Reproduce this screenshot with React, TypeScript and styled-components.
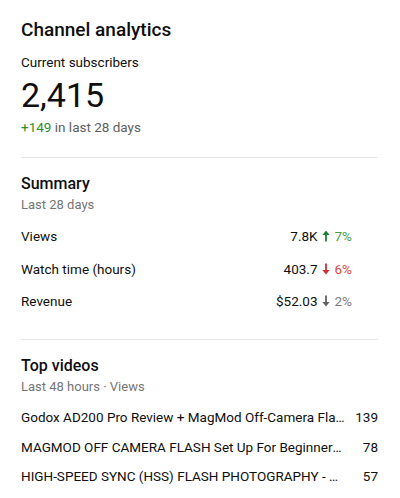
import React from 'react'
import styled, {createGlobalStyle} from 'styled-components'

const GlobalStyle = createGlobalStyle`
    body{
        margin: 0;
        background: #ffffff;
        font-family: Roboto, "Liberation Sans", sans-serif;
        color: #0f0f0f;
    }
`

const metrics = [
    {label: 'Views', value: '7.8K', change: '7%', trend: 'up'},
    {label: 'Watch time (hours)', value: '403.7', change: '6%', trend: 'down'},
    {label: 'Revenue', value: '$52.03', change: '2%', trend: 'flat'},
]

const videos = [
    {title: 'Godox AD200 Pro Review + MagMod Off-Camera Flash Kit', views: 139},
    {title: 'MAGMOD OFF CAMERA FLASH Set Up For Beginners (Step by Step)', views: 78},
    {title: 'HIGH-SPEED SYNC (HSS) FLASH PHOTOGRAPHY - Explained', views: 57},
]

const trendColors: any = {
    up: {arrow: '#1e7e34', text: '#43a047'},
    down: {arrow: '#d32f2f', text: '#e0483e'},
    flat: {arrow: '#606060', text: '#7a7a7a'},
}

function Arrow({trend}: {trend: string}) {
    const up = trend === 'up'
    const c = trendColors[trend].arrow
    return (
        <svg width="8" height="12" viewBox="0 0 8 12">
            {up ? (
                <>
                    <path d="M4 0.5 L7.6 5 L0.4 5 Z" fill={c} />
                    <rect x="3.1" y="4.5" width="1.8" height="7" fill={c} />
                </>
            ) : (
                <>
                    <rect x="3.1" y="0.5" width="1.8" height="7" fill={c} />
                    <path d="M4 11.5 L7.6 7 L0.4 7 Z" fill={c} />
                </>
            )}
        </svg>
    )
}

function App() {
    return (
        <Page>
            <GlobalStyle />
            <Title>Channel analytics</Title>
            <Label>Current subscribers</Label>
            <BigNumber>2,415</BigNumber>
            <Delta><Green>+149</Green> in last 28 days</Delta>
            <Divider />
            <SectionTitle>Summary</SectionTitle>
            <SubTitle>Last 28 days</SubTitle>
            <MetricList>
                {metrics.map((m) => (
                    <MetricRow key={m.label}>
                        <span>{m.label}</span>
                        <MetricValue>
                            {m.value}
                            <Arrow trend={m.trend} />
                            <Change color={trendColors[m.trend].text}>{m.change}</Change>
                        </MetricValue>
                    </MetricRow>
                ))}
            </MetricList>
            <Divider $top={21} />
            <SectionTitle>Top videos</SectionTitle>
            <SubTitle>Last 48 hours · Views</SubTitle>
            <VideoList>
                {videos.map((v) => (
                    <VideoRow key={v.title}>
                        <VideoTitle>{v.title}</VideoTitle>
                        <VideoViews>{v.views}</VideoViews>
                    </VideoRow>
                ))}
            </VideoList>
        </Page>
    )
}

const Page = styled.div`
    padding: 18px 22px 0 21px;
    display: flex;
    flex-direction: column;
`
const Title = styled.h1`
    margin: 0;
    font-size: 19px;
    line-height: 24px;
    font-weight: 500;
    color: #0f0f0f;
`
const Label = styled.div`
    margin-top: 12px;
    font-size: 13.5px;
    line-height: 16px;
    color: #0f0f0f;
`
const BigNumber = styled.div`
    margin-top: 5px;
    font-size: 34px;
    line-height: 40px;
    color: #0f0f0f;
`
const Delta = styled.div`
    margin-top: 4px;
    font-size: 13.5px;
    line-height: 16px;
    color: #606060;
`
const Green = styled.span`
    color: #2e8b2e;
`
const Divider = styled.hr<{$top?: number}>`
    margin: ${(p) => p.$top ?? 22}px 0 0;
    border: none;
    border-top: 1px solid #e5e5e5;
`
const SectionTitle = styled.h2`
    margin: 16px 0 0;
    font-size: 16px;
    line-height: 20px;
    font-weight: 500;
    color: #0f0f0f;
`
const SubTitle = styled.div`
    margin-top: 3px;
    font-size: 13px;
    line-height: 16px;
    color: #757575;
`
const MetricList = styled.div`
    margin-top: 7px;
    padding-right: 26px;
`
const MetricRow = styled.div`
    display: flex;
    justify-content: space-between;
    align-items: center;
    height: 32.5px;
    font-size: 13.5px;
    color: #0f0f0f;
`
const MetricValue = styled.div`
    display: flex;
    align-items: center;
    gap: 3px;
    svg{
        margin-left: 1px;
    }
`
const Change = styled.span<{color: string}>`
    color: ${(p) => p.color};
    margin-left: 2px;
`
const VideoList = styled.div`
    margin-top: 8px;
`
const VideoRow = styled.div`
    display: flex;
    align-items: center;
    height: 29.5px;
    font-size: 13.5px;
    color: #0f0f0f;
`
const VideoTitle = styled.span`
    flex: 1;
    min-width: 0;
    white-space: nowrap;
    overflow: hidden;
    text-overflow: ellipsis;
`
const VideoViews = styled.span`
    width: 33px;
    text-align: right;
    flex-shrink: 0;
`

export default App
